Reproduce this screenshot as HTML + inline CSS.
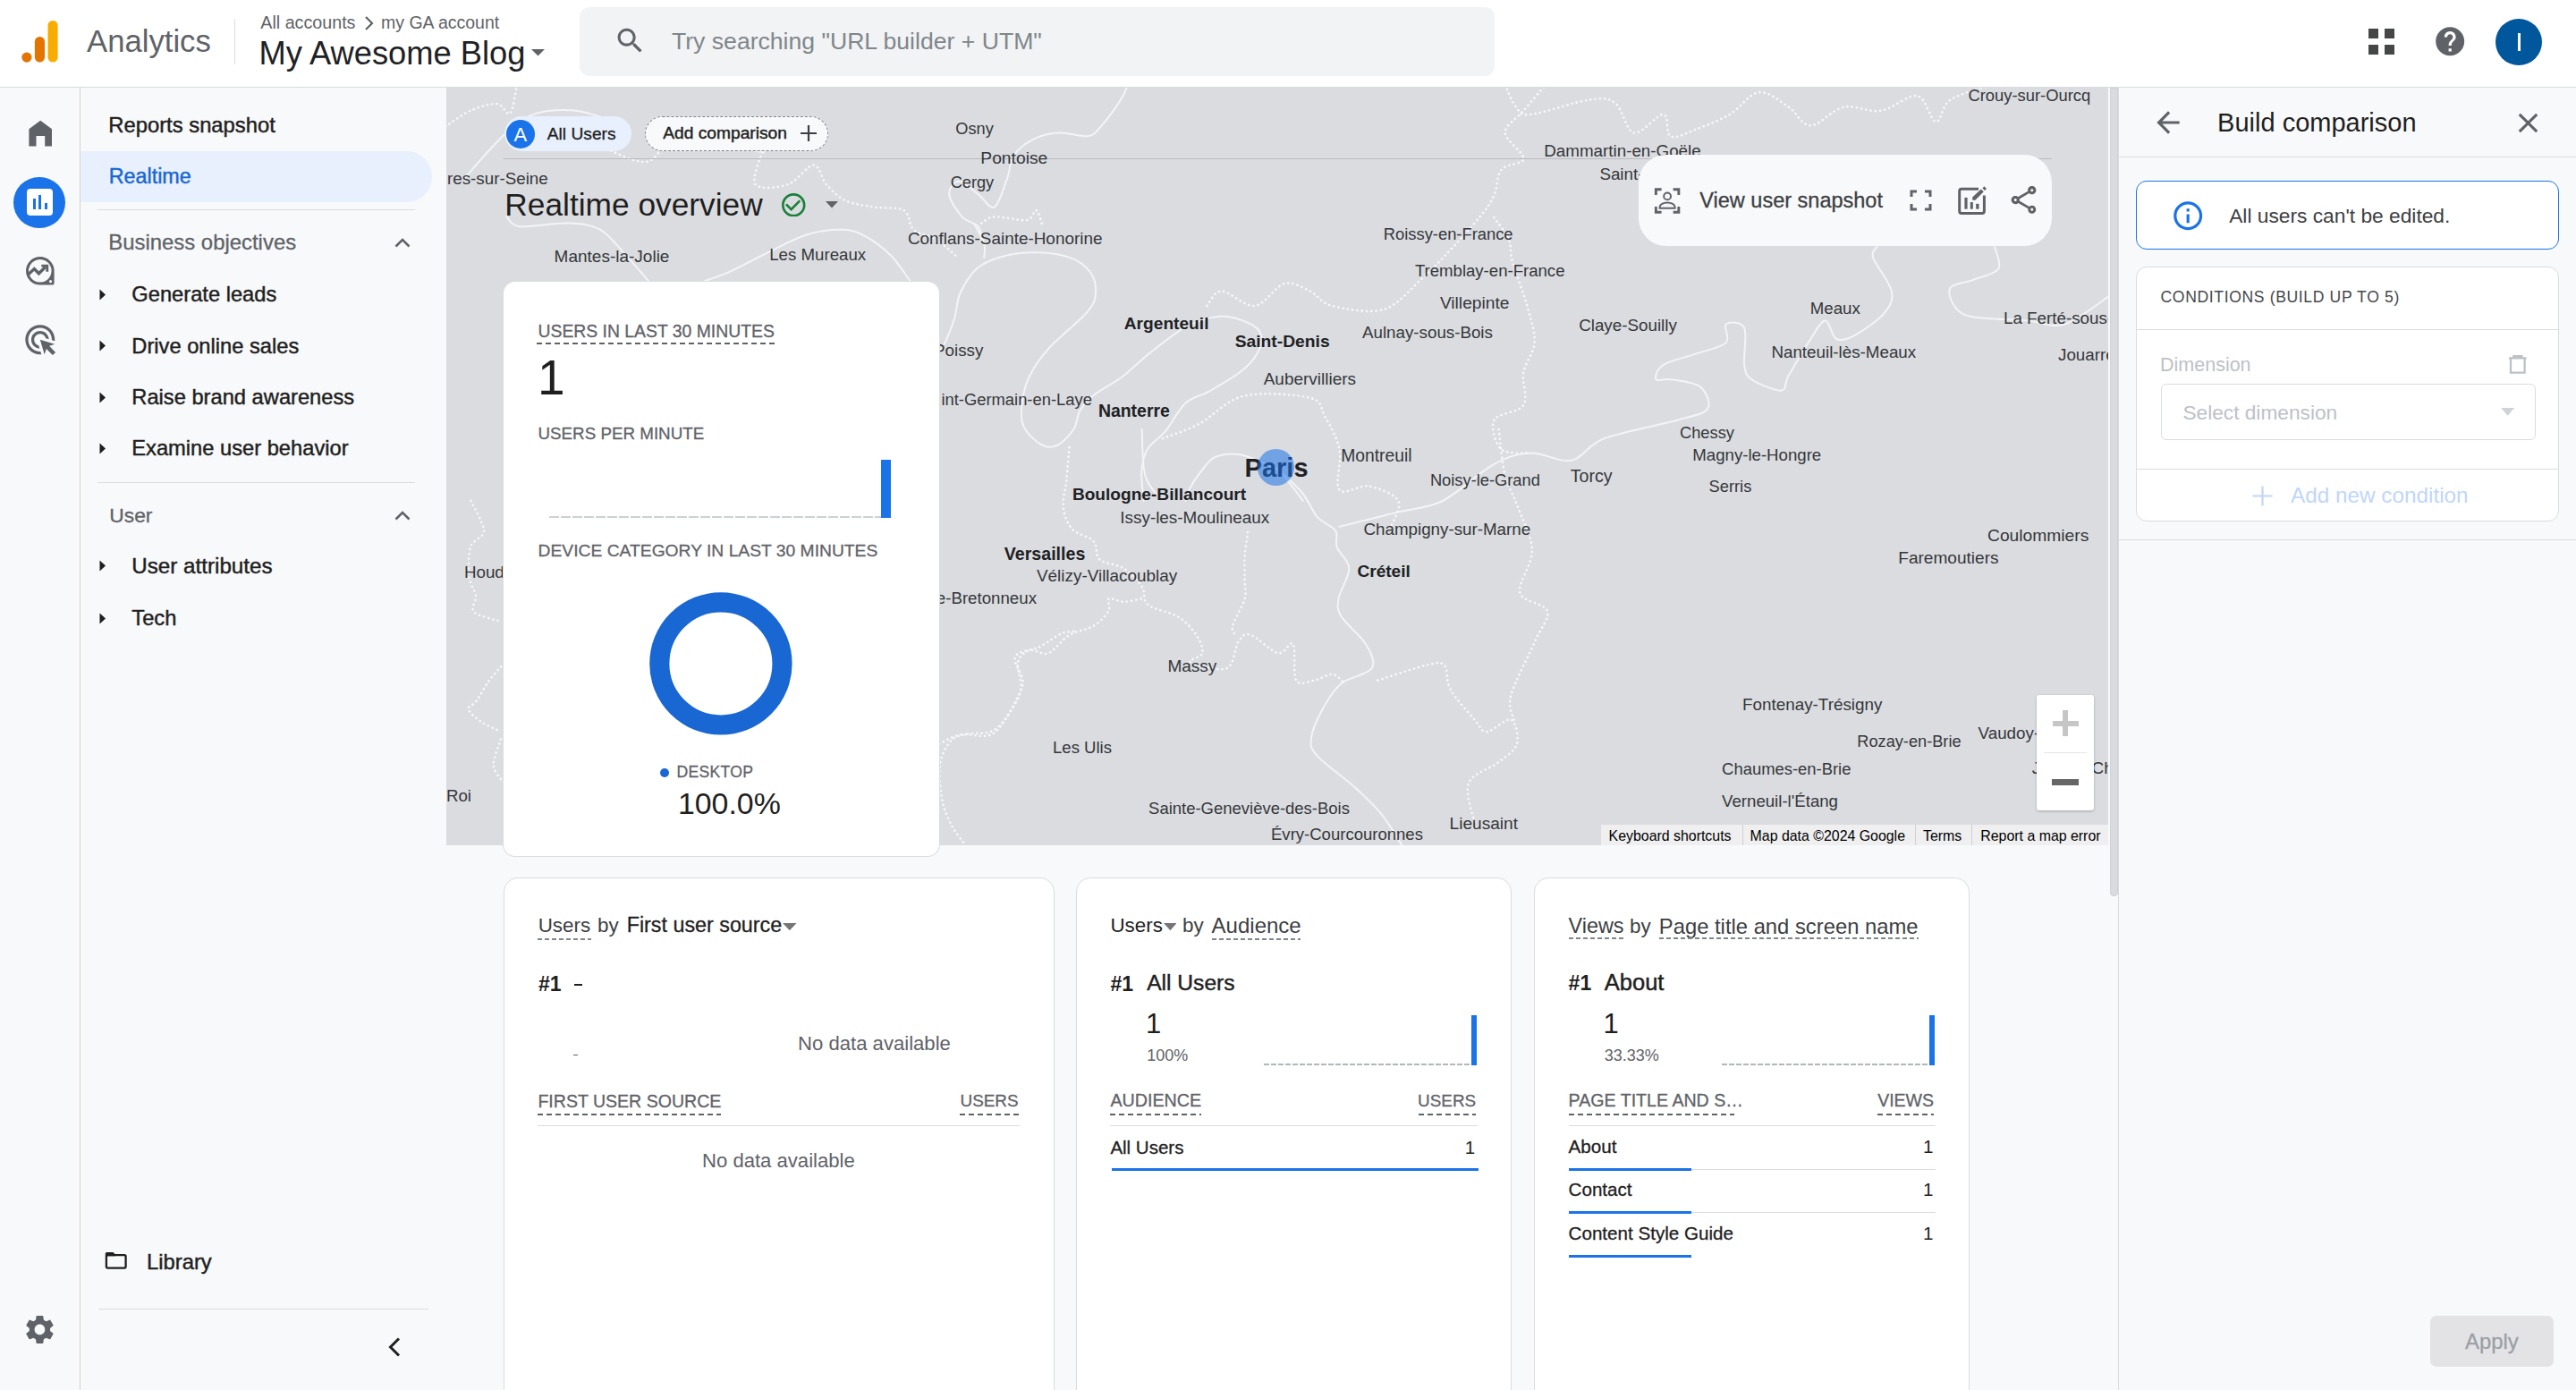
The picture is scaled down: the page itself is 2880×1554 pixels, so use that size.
<!DOCTYPE html>
<html><head><meta charset="utf-8"><title>Realtime overview</title>
<style>
html,body{margin:0;padding:0}
body{width:2880px;height:1554px;overflow:hidden;position:relative;background:#f8f9fa;font-family:"Liberation Sans",sans-serif;color:#202124}
@media (max-width:1600px){html{zoom:0.5}}
svg{display:block}
</style></head><body>
<div style="position:absolute;left:0.0px;top:0.0px;width:2880.0px;height:97.0px;background:#fff;"></div>
<div style="position:absolute;left:0.0px;top:97.0px;width:2880.0px;height:1.0px;background:#dadce0;"></div>
<svg style="position:absolute;left:20.0px;top:20.0px;" width="50.0" height="54.0" viewBox="20 20 50 54"><rect x="53.5" y="23" width="11.1" height="46.6" rx="5.5" fill="#f9ab00"/><rect x="38.9" y="40.9" width="11.1" height="28.7" rx="5.5" fill="#e37400"/><circle cx="29.9" cy="64.1" r="5.6" fill="#e37400"/></svg>
<div style="position:absolute;left:97.0px;top:29.2px;font-size:34.7px;line-height:1;white-space:nowrap;color:#5f6368;">Analytics</div>
<div style="position:absolute;left:262.0px;top:21.0px;width:1.0px;height:51.0px;background:#dadce0;"></div>
<div style="position:absolute;left:291.3px;top:15.5px;font-size:19.7px;line-height:1;white-space:nowrap;color:#5f6368;">All accounts</div>
<svg style="position:absolute;left:404.0px;top:16.0px;" width="18.0" height="20.0" viewBox="0 0 18 20"><polyline points="5,3 12,10 5,17" fill="none" stroke="#5f6368" stroke-width="2.2"/></svg>
<div style="position:absolute;left:426.0px;top:15.6px;font-size:19.5px;line-height:1;white-space:nowrap;color:#5f6368;">my GA account</div>
<div style="position:absolute;left:289.5px;top:41.9px;font-size:36.3px;line-height:1;white-space:nowrap;color:#202124;">My Awesome Blog</div>
<svg style="position:absolute;left:594.0px;top:55.0px;" width="15.0" height="8.0" viewBox="0 0 15 8"><path d="M0 0h15L7.5 7.5z" fill="#5f6368"/></svg>
<div style="position:absolute;left:648.0px;top:8.0px;width:1023.0px;height:77.0px;background:#f1f3f4;border-radius:11px"></div>
<svg style="position:absolute;left:686.4px;top:26.9px;" width="37.0" height="37.0" viewBox="0 0 24 24"><path fill="#5f6368" d="M15.5 14h-.79l-.28-.27C15.41 12.59 16 11.11 16 9.5 16 5.91 13.09 3 9.5 3S3 5.91 3 9.5 5.91 16 9.5 16c1.61 0 3.09-.59 4.23-1.57l.27.28v.79l5 4.99L20.49 19l-4.99-5zm-6 0C7.01 14 5 11.99 5 9.5S7.01 5 9.5 5 14 7.01 14 9.5 11.99 14 9.5 14z"/></svg>
<div style="position:absolute;left:751.0px;top:32.7px;font-size:26.6px;line-height:1;white-space:nowrap;color:#80868b;">Try searching "URL builder + UTM"</div>
<div style="position:absolute;left:2648.0px;top:32.0px;width:11.0px;height:11.0px;background:#444746;"></div>
<div style="position:absolute;left:2648.0px;top:50.0px;width:11.0px;height:11.0px;background:#444746;"></div>
<div style="position:absolute;left:2666.0px;top:32.0px;width:11.0px;height:11.0px;background:#444746;"></div>
<div style="position:absolute;left:2666.0px;top:50.0px;width:11.0px;height:11.0px;background:#444746;"></div>
<svg style="position:absolute;left:2719.8px;top:26.5px;" width="38.4" height="38.4" viewBox="0 0 24 24"><path fill="#5f6368" d="M12 2C6.48 2 2 6.48 2 12s4.48 10 10 10 10-4.48 10-10S17.52 2 12 2zm1 17h-2v-2h2v2zm2.07-7.75l-.9.92C13.45 12.9 13 13.5 13 15h-2v-.5c0-1.1.45-2.1 1.17-2.83l1.24-1.26c.37-.36.59-.86.59-1.41 0-1.1-.9-2-2-2s-2 .9-2 2H8c0-2.21 1.79-4 4-4s4 1.79 4 4c0 .88-.36 1.68-.93 2.25z"/></svg>
<div style="position:absolute;left:2790px;top:20.5px;width:52px;height:52px;border-radius:50%;background:#01579b"></div>
<div style="position:absolute;left:2814.5px;top:37.0px;width:3.0px;height:19.5px;background:#fff;"></div>
<div style="position:absolute;left:89.0px;top:98.0px;width:1.0px;height:1456.0px;background:#d3d3d3;"></div>
<svg style="position:absolute;left:28.0px;top:130.0px;" width="34.0" height="36.0" viewBox="28 130 34 36"><path fill="#5f6368" d="M45.2 134.8L58 144.3V163.4H50.2V152.1H40.5V163.4H32.4V144.3Z"/></svg>
<div style="position:absolute;left:15.2px;top:197.9px;width:57.4px;height:57px;border-radius:50%;background:#1a73e8"></div>
<div style="position:absolute;left:30.2px;top:211.0px;width:29.0px;height:29.5px;background:#fff;border-radius:4px"></div>
<div style="position:absolute;left:36.7px;top:222.3px;width:3.3px;height:11.9px;background:#1a73e8;"></div>
<div style="position:absolute;left:43.2px;top:217.6px;width:3.2px;height:16.6px;background:#1a73e8;"></div>
<div style="position:absolute;left:49.7px;top:226.6px;width:3.3px;height:7.6px;background:#1a73e8;"></div>
<svg style="position:absolute;left:25.0px;top:283.0px;" width="40.0" height="40.0" viewBox="25 283 40 40"><path fill-rule="evenodd" fill="#5f6368" d="M44.8 287A15.8 15.8 0 0 1 60.6 302.8V316.4Q60.6 318.6 58.4 318.6H44.8A15.8 15.8 0 0 1 44.8 287ZM44.8 290A12.8 12.8 0 1 0 44.81 290Z"/><circle cx="56.5" cy="314.7" r="1.6" fill="#f8f9fa"/><polyline points="31.4,307 38.3,300.6 43.4,305.8 51,298.3" fill="none" stroke="#5f6368" stroke-width="3.4"/><polyline points="46.3,297.2 52.8,297.2 52.8,303.8" fill="none" stroke="#5f6368" stroke-width="2.8"/></svg>
<svg style="position:absolute;left:25.4px;top:359.5px;" width="39.6" height="39.6" viewBox="0 0 24 24"><path fill="#5f6368" d="M11.71,17.99C8.53,17.84,6,15.22,6,12c0-3.31,2.69-6,6-6c3.22,0,5.84,2.53,5.99,5.71l-2.1-0.63C15.48,9.31,13.89,8,12,8 c-2.21,0-4,1.79-4,4c0,1.89,1.31,3.48,3.08,3.89L11.71,17.99z M22,12c0,0.3-0.01,0.6-0.04,0.9l-1.97-0.59C20,12.21,20,12.1,20,12 c0-4.42-3.58-8-8-8s-8,3.58-8,8s3.58,8,8,8c0.1,0,0.21,0,0.31-0.01l0.59,1.97C12.6,21.99,12.3,22,12,22C6.48,22,2,17.52,2,12 C2,6.48,6.48,2,12,2S22,6.48,22,12z M18.23,16.26L22,15l-10-3l3,10l1.26-3.77l4.27,4.27l1.96-1.96L18.23,16.26z"/></svg>
<svg style="position:absolute;left:25.2px;top:1467.2px;" width="38.9" height="38.9" viewBox="0 0 24 24"><path fill="#5f6368" d="M19.14 12.94c.04-.3.06-.61.06-.94 0-.32-.02-.64-.07-.94l2.03-1.58c.18-.14.23-.41.12-.61l-1.92-3.32c-.12-.22-.37-.29-.59-.22l-2.39.96c-.5-.38-1.03-.7-1.62-.94l-.36-2.54c-.04-.24-.24-.41-.48-.41h-3.84c-.24 0-.43.17-.47.41l-.36 2.54c-.59.24-1.13.57-1.62.94l-2.39-.96c-.22-.08-.47 0-.59.22L2.74 8.87c-.12.21-.08.47.12.61l2.03 1.58c-.05.3-.09.63-.09.94s.02.64.07.94l-2.03 1.58c-.18.14-.23.41-.12.61l1.92 3.32c.12.22.37.29.59.22l2.39-.96c.5.38 1.03.7 1.62.94l.36 2.54c.05.24.24.41.48.41h3.84c.24 0 .44-.17.47-.41l.36-2.54c.59-.24 1.13-.56 1.62-.94l2.39.96c.22.08.47 0 .59-.22l1.92-3.32c.12-.22.07-.47-.12-.61l-2.01-1.58zM12 15.6c-1.98 0-3.6-1.62-3.6-3.6s1.62-3.6 3.6-3.6 3.6 1.62 3.6 3.6-1.62 3.6-3.6 3.6z"/></svg>
<div style="position:absolute;left:121.3px;top:127.6px;font-size:23.8px;line-height:1;white-space:nowrap;color:#1f1f1f;-webkit-text-stroke:0.45px currentColor;">Reports snapshot</div>
<div style="position:absolute;left:90.0px;top:169.2px;width:392.8px;height:56.5px;background:#e8f0fe;border-radius:0 28px 28px 0"></div>
<div style="position:absolute;left:121.8px;top:186.2px;font-size:23.3px;line-height:1;white-space:nowrap;color:#1967d2;-webkit-text-stroke:0.45px currentColor;">Realtime</div>
<div style="position:absolute;left:109.0px;top:234.0px;width:355.0px;height:1.0px;background:#dadce0;"></div>
<div style="position:absolute;left:121.3px;top:259.2px;font-size:23.9px;line-height:1;white-space:nowrap;color:#5f6368;-webkit-text-stroke:0.3px currentColor;">Business objectives</div>
<svg style="position:absolute;left:441.0px;top:265.0px;" width="18.0" height="12.0" viewBox="0 0 18 12"><polyline points="1.5,10.5 9,3 16.5,10.5" fill="none" stroke="#5f6368" stroke-width="2.6"/></svg>
<svg style="position:absolute;left:111.0px;top:322.8px;" width="8.0" height="13.0" viewBox="0 0 8 13"><path d="M0.5 0.5L7 6.5L0.5 12.5z" fill="#1f1f1f"/></svg>
<div style="position:absolute;left:147.3px;top:318.2px;font-size:23.7px;line-height:1;white-space:nowrap;color:#1f1f1f;-webkit-text-stroke:0.45px currentColor;">Generate leads</div>
<svg style="position:absolute;left:111.0px;top:380.2px;" width="8.0" height="13.0" viewBox="0 0 8 13"><path d="M0.5 0.5L7 6.5L0.5 12.5z" fill="#1f1f1f"/></svg>
<div style="position:absolute;left:147.3px;top:375.6px;font-size:23.7px;line-height:1;white-space:nowrap;color:#1f1f1f;-webkit-text-stroke:0.45px currentColor;">Drive online sales</div>
<svg style="position:absolute;left:111.0px;top:437.6px;" width="8.0" height="13.0" viewBox="0 0 8 13"><path d="M0.5 0.5L7 6.5L0.5 12.5z" fill="#1f1f1f"/></svg>
<div style="position:absolute;left:147.3px;top:433.0px;font-size:23.7px;line-height:1;white-space:nowrap;color:#1f1f1f;-webkit-text-stroke:0.45px currentColor;">Raise brand awareness</div>
<svg style="position:absolute;left:111.0px;top:495.0px;" width="8.0" height="13.0" viewBox="0 0 8 13"><path d="M0.5 0.5L7 6.5L0.5 12.5z" fill="#1f1f1f"/></svg>
<div style="position:absolute;left:147.3px;top:490.4px;font-size:23.7px;line-height:1;white-space:nowrap;color:#1f1f1f;-webkit-text-stroke:0.45px currentColor;">Examine user behavior</div>
<div style="position:absolute;left:109.0px;top:539.0px;width:355.0px;height:1.0px;background:#dadce0;"></div>
<div style="position:absolute;left:122.3px;top:564.6px;font-size:22.8px;line-height:1;white-space:nowrap;color:#5f6368;-webkit-text-stroke:0.3px currentColor;">User</div>
<svg style="position:absolute;left:441.0px;top:570.0px;" width="18.0" height="12.0" viewBox="0 0 18 12"><polyline points="1.5,10.5 9,3 16.5,10.5" fill="none" stroke="#5f6368" stroke-width="2.6"/></svg>
<svg style="position:absolute;left:111.0px;top:626.4px;" width="8.0" height="13.0" viewBox="0 0 8 13"><path d="M0.5 0.5L7 6.5L0.5 12.5z" fill="#1f1f1f"/></svg>
<div style="position:absolute;left:147.3px;top:621.3px;font-size:24.2px;line-height:1;white-space:nowrap;color:#1f1f1f;-webkit-text-stroke:0.45px currentColor;">User attributes</div>
<svg style="position:absolute;left:111.0px;top:684.7px;" width="8.0" height="13.0" viewBox="0 0 8 13"><path d="M0.5 0.5L7 6.5L0.5 12.5z" fill="#1f1f1f"/></svg>
<div style="position:absolute;left:147.3px;top:680.1px;font-size:23.7px;line-height:1;white-space:nowrap;color:#1f1f1f;-webkit-text-stroke:0.45px currentColor;">Tech</div>
<svg style="position:absolute;left:114.0px;top:1396.0px;" width="32.0" height="26.0" viewBox="114 1396 32 26"><rect x="118.9" y="1403.1" width="21.7" height="14.6" rx="1.6" fill="none" stroke="#1f1f1f" stroke-width="2.3"/><path d="M117.8 1401.5Q117.8 1400 119.3 1400H126.5L129 1402.5V1404.2H117.8Z" fill="#1f1f1f"/></svg>
<div style="position:absolute;left:164.0px;top:1399.3px;font-size:23.8px;line-height:1;white-space:nowrap;color:#1f1f1f;-webkit-text-stroke:0.45px currentColor;">Library</div>
<div style="position:absolute;left:110.0px;top:1463.0px;width:368.8px;height:1.0px;background:#dadce0;"></div>
<svg style="position:absolute;left:432.0px;top:1494.0px;" width="18.0" height="24.0" viewBox="0 0 18 24"><polyline points="14,2.5 4.5,12 14,21.5" fill="none" stroke="#1f1f1f" stroke-width="3"/></svg>
<div style="position:absolute;left:499px;top:98px;width:1858px;height:847px;background:#dbdce0;overflow:hidden">
<div style="position:absolute;left:-499px;top:-98px;width:2880px;height:1554px">
<svg style="position:absolute;left:0;top:0" width="2880" height="1000" viewBox="0 0 2880 1000"><g fill="none" stroke="#f3f4f6" stroke-width="2" stroke-linecap="round" stroke-linejoin="round"><path d="M1278.6 559.9 C1278.2 554.3 1275.6 536.1 1276.3 526.5 C1277.1 516.8 1278.6 509.4 1283.0 502.0 C1287.5 494.5 1296.0 490.4 1303.1 481.9 C1310.2 473.3 1317.2 458.1 1325.4 450.7 C1333.6 443.2 1341.7 443.2 1352.2 437.3 C1362.6 431.3 1378.9 422.1 1387.8 415.0 C1396.7 407.9 1401.9 401.6 1405.7 394.9 C1409.4 388.2 1411.6 380.4 1410.1 374.9 C1408.6 369.3 1404.5 365.0 1396.7 361.5 C1388.9 358.0 1375.2 352.9 1363.3 353.7 C1351.4 354.4 1338.4 359.1 1325.4 365.9 C1312.4 372.8 1297.2 385.6 1285.3 394.9 C1273.4 404.2 1264.5 413.9 1254.0 421.7 C1243.6 429.5 1230.6 435.4 1222.8 441.8 C1215.0 448.1 1210.9 453.3 1207.2 459.6 C1203.5 465.9 1204.6 473.3 1200.5 479.7 C1196.4 486.0 1188.6 494.5 1182.7 497.5 C1176.8 500.5 1171.2 500.8 1164.9 497.5 C1158.5 494.1 1148.5 485.2 1144.8 477.4 C1141.1 469.6 1141.4 460.3 1142.6 450.7 C1143.7 441.0 1146.3 429.9 1151.5 419.5 C1156.7 409.0 1163.0 400.1 1173.8 388.2 C1184.6 376.3 1207.6 358.5 1216.1 348.1 C1224.7 337.7 1224.7 333.2 1225.1 325.8 C1225.4 318.4 1223.2 309.8 1218.4 303.5 C1213.5 297.2 1205.7 291.4 1196.1 287.9 C1186.4 284.4 1172.3 282.7 1160.4 282.3 C1148.5 282.0 1135.9 282.9 1124.7 285.7 C1113.6 288.5 1102.1 292.0 1093.5 299.1 C1085.0 306.1 1077.9 318.4 1073.4 328.0 C1069.0 337.7 1070.1 347.0 1066.8 357.0 C1063.4 367.1 1057.8 381.9 1053.4 388.2 C1048.9 394.6 1042.2 393.8 1040.0 394.9"/><path d="M1100.2 287.9 C1100.2 285.3 1102.1 278.6 1100.2 272.3 C1098.3 266.0 1090.9 253.7 1089.1 250.0"/><path d="M1456.9 559.9 C1454.3 556.6 1446.5 545.8 1441.3 539.9 C1436.1 533.9 1434.6 529.5 1425.7 524.2 C1416.8 519.0 1399.0 510.9 1387.8 508.6 C1376.7 506.4 1366.3 507.9 1358.8 510.9 C1351.4 513.8 1348.1 520.5 1343.2 526.5 C1338.4 532.4 1332.8 541.0 1329.9 546.5 C1326.9 552.1 1326.1 557.7 1325.4 559.9"/><path d="M1097.3 267.7 C1096.7 265.3 1097.3 257.4 1093.7 253.2 C1090.1 249.0 1081.0 248.4 1075.6 242.4 C1070.2 236.4 1061.8 223.8 1061.2 217.1 C1060.6 210.5 1066.6 202.7 1072.0 202.7 C1077.4 202.7 1087.0 212.3 1093.7 217.1 C1100.3 221.9 1106.3 234.6 1111.7 231.6 C1117.1 228.6 1122.5 208.7 1126.2 199.1 C1129.8 189.5 1128.6 181.0 1133.4 173.8 C1138.2 166.6 1146.6 160.0 1155.0 155.8 C1163.5 151.5 1173.7 149.1 1183.9 148.5 C1194.1 147.9 1208.6 153.4 1216.4 152.2 C1224.2 150.9 1224.8 147.9 1230.9 141.3 C1236.9 134.7 1247.7 119.7 1252.5 112.4 C1257.3 105.2 1258.5 100.4 1259.7 98.0"/><path d="M1017.9 314.6 C1014.2 309.8 1004.6 294.1 996.2 285.7 C987.8 277.3 976.3 268.9 967.3 264.1 C958.3 259.3 952.9 257.1 942.0 256.8 C931.2 256.5 916.2 258.0 902.3 262.3 C888.5 266.5 873.5 275.2 859.0 282.1 C844.6 289.0 827.7 298.4 815.7 303.8 C803.7 309.2 791.6 312.8 786.8 314.6"/><path d="M725.4 314.6 C721.2 309.8 709.2 295.4 700.2 285.7 C691.1 276.1 682.1 262.9 671.3 256.8 C660.5 250.8 650.2 250.2 635.2 249.6 C620.1 249.0 592.5 254.4 581.0 253.2 C569.6 252.0 569.0 244.2 566.6 242.4"/><path d="M519.7 199.1 C523.9 194.3 536.5 179.2 544.9 170.2 C553.4 161.2 561.2 152.2 570.2 144.9 C579.2 137.7 587.7 130.5 599.1 126.9 C610.5 123.3 626.8 122.7 638.8 123.3 C650.8 123.9 665.9 129.3 671.3 130.5"/><path d="M1426.5 522.3 C1431.4 527.1 1448.2 541.7 1455.9 551.0 C1463.6 560.3 1466.6 571.0 1472.8 578.1 C1479.0 585.1 1489.4 587.6 1493.1 593.3 C1496.7 598.9 1492.2 604.8 1494.8 611.9 C1497.3 618.9 1508.0 626.0 1508.3 635.5 C1508.6 645.1 1497.9 660.3 1496.5 669.3 C1495.1 678.4 1494.8 681.2 1499.8 689.6 C1504.9 698.1 1521.3 710.5 1526.9 720.1 C1532.5 729.6 1538.2 739.8 1533.7 747.1 C1529.2 754.4 1508.9 756.7 1499.8 764.0 C1490.8 771.3 1485.2 780.9 1479.6 791.1 C1473.9 801.2 1467.2 815.9 1466.0 824.9 C1464.9 833.9 1464.9 836.2 1472.8 845.2 C1480.7 854.2 1501.5 868.3 1513.4 879.0 C1525.2 889.7 1534.8 898.4 1543.8 909.4 C1552.8 920.4 1563.5 939.0 1567.5 944.9"/><path d="M1276.7 480.0 C1277.2 488.5 1276.7 517.8 1280.1 530.7 C1283.4 543.7 1294.2 553.3 1297.0 557.8"/><path d="M1497.5 588.8 C1508.5 586.1 1544.2 577.2 1563.4 572.4 C1582.6 567.6 1594.9 568.9 1612.8 560.0 C1630.6 551.1 1653.9 527.8 1670.4 518.9 C1686.8 510.0 1697.1 507.2 1711.5 506.5 C1725.9 505.8 1743.1 517.5 1756.8 514.8 C1770.5 512.0 1773.9 497.6 1793.8 490.1 C1813.7 482.5 1856.9 475.0 1876.1 469.5 C1895.3 464.0 1904.9 463.3 1909.1 457.1 C1913.2 451.0 1907.7 437.9 1900.8 432.4 C1894.0 427.0 1876.1 425.6 1867.9 424.2 C1859.7 422.8 1852.8 427.0 1851.4 424.2 C1850.1 421.5 1852.1 412.6 1859.7 407.8 C1867.2 403.0 1885.0 399.5 1896.7 395.4 C1908.4 391.3 1924.1 388.6 1929.6 383.1 C1935.1 377.6 1926.2 365.2 1929.6 362.5 C1933.1 359.7 1946.8 359.1 1950.2 366.6 C1953.6 374.1 1948.8 398.2 1950.2 407.8 C1951.6 417.4 1951.6 419.4 1958.4 424.2 C1965.3 429.0 1984.5 437.2 1991.4 436.6 C1998.2 435.9 1994.1 429.7 1999.6 420.1 C2005.1 410.5 2017.4 389.2 2024.3 379.0 C2031.1 368.7 2035.9 358.4 2040.7 358.4 C2045.5 358.4 2047.6 376.2 2053.1 379.0 C2058.6 381.7 2064.7 379.6 2073.7 374.8 C2082.6 370.0 2099.7 358.4 2106.6 350.1 C2113.4 341.9 2116.9 335.7 2114.8 325.5 C2112.8 315.2 2097.0 296.6 2094.2 288.4 C2091.5 280.2 2097.7 278.1 2098.4 276.1"/><path d="M2230.0 276.1 C2230.7 280.2 2238.3 294.6 2234.2 300.8 C2230.0 306.9 2214.3 309.7 2205.3 313.1 C2196.4 316.5 2184.1 316.5 2180.7 321.3 C2177.2 326.1 2180.7 336.4 2184.8 341.9 C2188.9 347.4 2191.6 351.5 2205.3 354.3 C2219.1 357.0 2249.9 357.0 2267.1 358.4 C2284.2 359.7 2292.7 367.3 2308.2 362.5 C2323.7 357.7 2351.4 335.1 2360.1 329.6"/></g><g fill="none" stroke="#f6f7f9" stroke-width="2.7" stroke-dasharray="0.1 5.2" stroke-linecap="round"><path d="M526.5 560.0 C528.3 563.7 535.3 576.4 537.7 582.4 C540.0 588.5 542.4 591.8 540.5 596.5 C538.6 601.1 529.3 603.5 526.5 610.5 C523.7 617.5 523.7 631.5 523.7 638.5 C523.7 645.6 525.1 647.9 526.5 652.6 C527.9 657.2 531.6 661.4 532.1 666.6 C532.5 671.7 526.5 679.2 529.3 683.4 C532.1 687.6 543.8 690.0 548.9 691.8 C554.0 693.7 558.3 694.2 560.1 694.6"/><path d="M560.1 745.1 C557.8 747.9 550.8 755.4 546.1 762.0 C541.4 768.5 535.8 779.3 532.1 784.4 C528.3 789.5 522.7 789.1 523.7 792.8 C524.6 796.6 531.6 802.6 537.7 806.8 C543.8 811.1 556.4 816.2 560.1 818.1"/><path d="M560.1 826.5 C558.7 831.2 551.7 847.1 551.7 854.5 C551.7 862.0 558.7 868.6 560.1 871.4"/><path d="M1200.0 705.9 C1197.6 706.3 1191.8 705.9 1185.7 708.7 C1179.5 711.5 1171.6 718.5 1163.2 722.7 C1154.8 726.9 1138.4 727.4 1135.2 733.9 C1131.9 740.5 1143.6 753.5 1143.6 762.0 C1143.6 770.4 1138.4 777.4 1135.2 784.4 C1131.9 791.4 1128.6 798.4 1123.9 804.0 C1119.3 809.6 1114.6 815.3 1107.1 818.1 C1099.6 820.9 1086.5 819.0 1079.1 820.9 C1071.6 822.7 1066.9 823.7 1062.2 829.3 C1057.6 834.9 1052.4 843.3 1051.0 854.5 C1049.6 865.8 1051.5 884.9 1053.8 896.6 C1056.2 908.3 1060.8 916.7 1065.0 924.7 C1069.2 932.6 1076.7 941.0 1079.1 944.3"/><path d="M1349.4 341.9 C1352.1 339.2 1356.9 325.5 1365.8 325.5 C1374.8 325.5 1391.2 343.3 1402.9 341.9 C1414.5 340.5 1425.5 320.0 1435.8 317.2 C1446.1 314.5 1455.7 321.3 1464.6 325.5 C1473.5 329.6 1475.6 338.5 1489.3 341.9 C1503.0 345.3 1530.5 350.8 1546.9 346.0 C1563.4 341.2 1576.4 323.4 1588.1 313.1 C1599.7 302.8 1605.9 296.0 1616.9 284.3 C1627.8 272.6 1645.0 254.1 1653.9 243.1 C1662.8 232.2 1666.3 227.4 1670.4 218.5 C1674.5 209.5 1673.1 196.5 1678.6 189.7 C1684.1 182.8 1702.6 184.2 1703.3 177.3 C1704.0 170.4 1682.7 157.4 1682.7 148.5 C1682.7 139.6 1695.7 132.7 1703.3 123.8 C1710.8 114.9 1723.9 99.8 1728.0 95.0"/><path d="M1670.4 243.1 C1673.1 247.3 1683.4 259.6 1686.8 267.8 C1690.3 276.1 1687.5 280.2 1690.9 292.5 C1694.4 304.9 1703.3 326.8 1707.4 341.9 C1711.5 357.0 1716.3 370.7 1715.6 383.1 C1715.0 395.4 1705.3 404.3 1703.3 416.0 C1701.2 427.6 1708.8 444.1 1703.3 453.0 C1697.8 461.9 1674.5 461.3 1670.4 469.5 C1666.3 477.7 1671.7 496.2 1678.6 502.4 C1685.5 508.6 1706.0 505.8 1711.5 506.5"/><path d="M1300.0 490.1 C1306.9 487.3 1326.1 481.5 1341.2 473.6 C1356.2 465.7 1370.0 447.5 1390.5 442.7 C1411.1 437.9 1449.5 441.0 1464.6 444.8 C1479.7 448.6 1475.6 455.8 1481.1 465.4 C1486.6 475.0 1494.8 488.7 1497.5 502.4 C1500.3 516.1 1492.0 540.8 1497.5 547.7 C1503.0 554.5 1519.5 541.5 1530.5 543.6 C1541.4 545.6 1559.3 552.5 1563.4 560.0 C1567.5 567.6 1556.5 584.0 1555.1 588.8"/><path d="M1682.7 95.0 C1684.8 99.1 1690.3 114.2 1695.1 119.7 C1699.9 125.2 1697.8 129.3 1711.5 127.9 C1725.2 126.6 1761.6 113.5 1777.4 111.5 C1793.1 109.4 1797.9 109.4 1806.2 115.6 C1814.4 121.7 1817.8 146.4 1826.7 148.5 C1835.7 150.6 1852.8 127.2 1859.7 127.9 C1866.5 128.6 1861.7 149.9 1867.9 152.6 C1874.1 155.4 1885.7 148.5 1896.7 144.4 C1907.7 140.3 1922.1 134.8 1933.7 127.9 C1945.4 121.1 1955.7 104.6 1966.7 103.2 C1977.6 101.9 1990.0 113.5 1999.6 119.7 C2009.2 125.9 2014.0 140.3 2024.3 140.3 C2034.6 140.3 2048.3 122.4 2061.3 119.7 C2074.3 116.9 2088.8 125.9 2102.5 123.8 C2116.2 121.7 2133.3 105.3 2143.6 107.3 C2153.9 109.4 2158.0 135.5 2164.2 136.2 C2170.4 136.8 2170.4 118.3 2180.7 111.5 C2190.9 104.6 2218.4 97.7 2225.9 95.0"/><path d="M851.8 170.2 C850.6 176.2 839.8 200.3 844.6 206.3 C849.4 212.3 869.8 209.9 880.7 206.3 C891.5 202.7 902.3 184.6 909.6 184.6 C916.8 184.6 918.0 199.7 924.0 206.3 C930.0 212.9 936.6 220.1 945.7 224.4 C954.7 228.6 967.3 229.8 978.1 231.6 C989.0 233.4 1003.4 231.0 1010.6 235.2 C1017.9 239.4 1015.4 251.4 1021.5 256.8 C1027.5 262.3 1038.9 262.9 1046.7 267.7 C1054.6 272.5 1064.8 282.7 1068.4 285.7"/><path d="M1097.3 249.6 C1099.7 248.4 1103.3 243.0 1111.7 242.4 C1120.1 241.8 1140.0 247.2 1147.8 246.0 C1155.6 244.8 1155.6 234.0 1158.6 235.2 C1161.7 236.4 1164.7 250.2 1165.9 253.2"/><path d="M498.0 141.3 C502.8 138.3 517.3 127.5 526.9 123.3 C536.5 119.1 548.5 115.4 555.8 116.1 C563.0 116.7 566.6 129.9 570.2 126.9 C573.8 123.9 576.2 102.8 577.4 98.0"/><path d="M678.5 166.6 C685.7 169.0 708.6 182.2 721.8 181.0 C735.1 179.8 735.7 161.2 757.9 159.4 C780.2 157.6 839.2 168.4 855.4 170.2"/><path d="M1195.5 500.3 C1195.0 506.5 1193.3 526.2 1192.2 537.5 C1191.0 548.8 1187.6 558.9 1188.8 567.9 C1189.9 576.9 1193.3 585.4 1198.9 591.6 C1204.6 597.8 1217.5 599.5 1222.6 605.1 C1227.7 610.7 1223.7 620.3 1229.3 625.4 C1235.0 630.5 1248.5 630.5 1256.4 635.5 C1264.3 640.6 1272.2 649.1 1276.7 655.8 C1281.2 662.6 1276.7 670.5 1283.4 676.1 C1290.2 681.7 1308.2 684.0 1317.3 689.6 C1326.3 695.3 1333.0 703.2 1337.5 709.9 C1342.1 716.7 1345.4 725.1 1344.3 730.2 C1343.2 735.3 1326.3 737.5 1330.8 740.4 C1335.3 743.2 1362.3 751.1 1371.4 747.1 C1380.4 743.2 1380.4 722.9 1384.9 716.7 C1389.4 710.5 1391.1 707.7 1398.4 709.9 C1405.7 712.2 1421.0 728.5 1428.8 730.2 C1436.7 731.9 1442.4 715.0 1445.7 720.1 C1449.1 725.1 1445.2 753.9 1449.1 760.6 C1453.1 767.4 1462.7 761.8 1469.4 760.6 C1476.2 759.5 1484.1 753.3 1489.7 753.9 C1495.3 754.4 1501.0 762.3 1503.2 764.0"/><path d="M1395.0 595.0 C1394.5 599.5 1392.2 613.0 1391.6 622.0 C1391.1 631.0 1391.6 641.2 1391.6 649.1 C1391.6 657.0 1393.9 660.9 1391.6 669.3 C1389.4 677.8 1379.8 693.0 1378.1 699.8 C1376.4 706.5 1380.9 708.2 1381.5 709.9"/><path d="M1050.1 831.6 C1054.1 830.0 1064.2 823.2 1073.8 821.5 C1083.4 819.8 1098.6 825.4 1107.6 821.5 C1116.6 817.6 1122.3 806.3 1127.9 797.8 C1133.5 789.4 1139.7 780.4 1141.4 770.8 C1143.1 761.2 1136.4 747.7 1138.1 740.4 C1139.7 733.0 1145.9 728.5 1151.6 726.8 C1157.2 725.1 1164.5 733.0 1171.9 730.2 C1179.2 727.4 1187.1 715.0 1195.5 709.9 C1204.0 704.9 1215.3 704.3 1222.6 699.8 C1229.9 695.3 1236.7 687.9 1239.5 682.9 C1242.3 677.8 1236.7 671.0 1239.5 669.3 C1242.3 667.7 1250.2 672.7 1256.4 672.7 C1262.6 672.7 1273.3 669.9 1276.7 669.3"/><path d="M1540.4 760.6 C1549.4 757.8 1582.1 746.6 1594.5 743.7 C1606.9 740.9 1610.3 739.2 1614.8 743.7 C1619.3 748.2 1615.9 760.6 1621.6 770.8 C1627.2 780.9 1641.9 796.7 1648.6 804.6 C1655.4 812.5 1655.4 818.1 1662.1 818.1 C1668.9 818.1 1683.6 802.3 1689.2 804.6 C1694.8 806.9 1698.2 823.8 1696.0 831.6 C1693.7 839.5 1684.7 844.6 1675.7 851.9 C1666.7 859.3 1646.4 864.3 1641.9 875.6 C1637.4 886.9 1647.5 912.2 1648.6 919.6"/><path d="M1675.7 480.0 C1676.8 488.5 1679.1 516.6 1682.4 530.7 C1685.8 544.8 1690.9 550.4 1696.0 564.5 C1701.0 578.6 1712.3 598.9 1712.9 615.2 C1713.4 631.6 1696.5 651.3 1699.3 662.6 C1702.2 673.9 1727.0 673.9 1729.8 682.9 C1732.6 691.9 1723.0 700.9 1716.2 716.7 C1709.5 732.5 1693.1 762.9 1689.2 777.5 C1685.3 792.2 1692.0 800.1 1692.6 804.6"/></g></svg>
<div style="position:absolute;left:563.0px;top:177.0px;width:1730.7px;height:1.0px;background:#b9bbbf;"></div>
<div style="position:absolute;left:2200.5px;top:97.7px;font-size:18.36px;line-height:1;white-space:nowrap;color:#34373a;">Crouy-sur-Ourcq</div>
<div style="position:absolute;left:1068.3px;top:134.8px;font-size:18.2px;line-height:1;white-space:nowrap;color:#34373a;">Osny</div>
<div style="position:absolute;left:1096.3px;top:167.1px;font-size:19.27px;line-height:1;white-space:nowrap;color:#34373a;">Pontoise</div>
<div style="position:absolute;left:1726.3px;top:160.4px;font-size:18.8px;line-height:1;white-space:nowrap;color:#34373a;">Dammartin-en-Goële</div>
<div style="position:absolute;left:1788.4px;top:186.1px;font-size:18.8px;line-height:1;white-space:nowrap;color:#34373a;">Saint-Mard</div>
<div style="position:absolute;left:500.0px;top:191.4px;font-size:18.8px;line-height:1;white-space:nowrap;color:#34373a;">res-sur-Seine</div>
<div style="position:absolute;left:1062.7px;top:195.3px;font-size:18.2px;line-height:1;white-space:nowrap;color:#34373a;">Cergy</div>
<div style="position:absolute;left:1014.9px;top:257.5px;font-size:18.91px;line-height:1;white-space:nowrap;color:#34373a;">Conflans-Sainte-Honorine</div>
<div style="position:absolute;left:1546.8px;top:252.7px;font-size:18.35px;line-height:1;white-space:nowrap;color:#34373a;">Roissy-en-France</div>
<div style="position:absolute;left:619.6px;top:277.0px;font-size:19.0px;line-height:1;white-space:nowrap;color:#34373a;">Mantes-la-Jolie</div>
<div style="position:absolute;left:860.2px;top:276.3px;font-size:18.68px;line-height:1;white-space:nowrap;color:#34373a;">Les Mureaux</div>
<div style="position:absolute;left:1581.9px;top:294.2px;font-size:18.59px;line-height:1;white-space:nowrap;color:#34373a;">Tremblay-en-France</div>
<div style="position:absolute;left:1609.9px;top:328.7px;font-size:19.21px;line-height:1;white-space:nowrap;color:#34373a;">Villepinte</div>
<div style="position:absolute;left:2023.8px;top:335.9px;font-size:18.66px;line-height:1;white-space:nowrap;color:#34373a;">Meaux</div>
<div style="position:absolute;left:2240.0px;top:346.5px;font-size:18.8px;line-height:1;white-space:nowrap;color:#34373a;">La Ferté-sous-Jouarre</div>
<div style="position:absolute;left:1256.8px;top:352.0px;font-size:19.15px;line-height:1;white-space:nowrap;color:#202124;font-weight:bold;">Argenteuil</div>
<div style="position:absolute;left:1765.2px;top:354.8px;font-size:18.8px;line-height:1;white-space:nowrap;color:#34373a;">Claye-Souilly</div>
<div style="position:absolute;left:1523.0px;top:363.3px;font-size:18.76px;line-height:1;white-space:nowrap;color:#34373a;">Aulnay-sous-Bois</div>
<div style="position:absolute;left:1380.7px;top:372.1px;font-size:19.27px;line-height:1;white-space:nowrap;color:#202124;font-weight:bold;">Saint-Denis</div>
<div style="position:absolute;left:1044.0px;top:383.3px;font-size:18.8px;line-height:1;white-space:nowrap;color:#34373a;">Poissy</div>
<div style="position:absolute;left:1980.4px;top:384.7px;font-size:18.8px;line-height:1;white-space:nowrap;color:#34373a;">Nanteuil-lès-Meaux</div>
<div style="position:absolute;left:2301.0px;top:387.8px;font-size:18.8px;line-height:1;white-space:nowrap;color:#34373a;">Jouarre</div>
<div style="position:absolute;left:1412.7px;top:414.3px;font-size:18.98px;line-height:1;white-space:nowrap;color:#34373a;">Aubervilliers</div>
<div style="position:absolute;left:1052.4px;top:438.1px;font-size:18.39px;line-height:1;white-space:nowrap;color:#34373a;">int-Germain-en-Laye</div>
<div style="position:absolute;left:1227.9px;top:449.5px;font-size:19.45px;line-height:1;white-space:nowrap;color:#202124;font-weight:bold;">Nanterre</div>
<div style="position:absolute;left:1878.0px;top:474.8px;font-size:18.29px;line-height:1;white-space:nowrap;color:#34373a;">Chessy</div>
<div style="position:absolute;left:1892.3px;top:499.6px;font-size:18.64px;line-height:1;white-space:nowrap;color:#34373a;">Magny-le-Hongre</div>
<div style="position:absolute;left:1499.2px;top:499.8px;font-size:19.31px;line-height:1;white-space:nowrap;color:#34373a;">Montreuil</div>
<div style="position:absolute;left:1598.9px;top:528.1px;font-size:18.29px;line-height:1;white-space:nowrap;color:#34373a;">Noisy-le-Grand</div>
<div style="position:absolute;left:1755.8px;top:523.2px;font-size:19.55px;line-height:1;white-space:nowrap;color:#34373a;">Torcy</div>
<div style="position:absolute;left:1910.6px;top:534.8px;font-size:18.27px;line-height:1;white-space:nowrap;color:#34373a;">Serris</div>
<div style="position:absolute;left:1198.9px;top:543.2px;font-size:19.12px;line-height:1;white-space:nowrap;color:#202124;font-weight:bold;">Boulogne-Billancourt</div>
<div style="position:absolute;left:1252.3px;top:570.4px;font-size:18.9px;line-height:1;white-space:nowrap;color:#34373a;">Issy-les-Moulineaux</div>
<div style="position:absolute;left:1524.5px;top:583.0px;font-size:18.77px;line-height:1;white-space:nowrap;color:#34373a;">Champigny-sur-Marne</div>
<div style="position:absolute;left:2222.0px;top:589.4px;font-size:19.24px;line-height:1;white-space:nowrap;color:#34373a;">Coulommiers</div>
<div style="position:absolute;left:1122.8px;top:610.4px;font-size:19.63px;line-height:1;white-space:nowrap;color:#202124;font-weight:bold;">Versailles</div>
<div style="position:absolute;left:2122.3px;top:614.3px;font-size:19.06px;line-height:1;white-space:nowrap;color:#34373a;">Faremoutiers</div>
<div style="position:absolute;left:1517.4px;top:629.4px;font-size:19.12px;line-height:1;white-space:nowrap;color:#202124;font-weight:bold;">Créteil</div>
<div style="position:absolute;left:518.9px;top:631.0px;font-size:18.8px;line-height:1;white-space:nowrap;color:#34373a;">Houdan</div>
<div style="position:absolute;left:1159.0px;top:634.7px;font-size:18.9px;line-height:1;white-space:nowrap;color:#34373a;">Vélizy-Villacoublay</div>
<div style="position:absolute;left:1305.4px;top:735.3px;font-size:19.04px;line-height:1;white-space:nowrap;color:#34373a;">Massy</div>
<div style="position:absolute;left:1948.1px;top:778.5px;font-size:18.83px;line-height:1;white-space:nowrap;color:#34373a;">Fontenay-Trésigny</div>
<div style="position:absolute;left:2211.6px;top:810.6px;font-size:18.8px;line-height:1;white-space:nowrap;color:#34373a;">Vaudoy-en-Brie</div>
<div style="position:absolute;left:2076.3px;top:819.6px;font-size:18.2px;line-height:1;white-space:nowrap;color:#34373a;">Rozay-en-Brie</div>
<div style="position:absolute;left:1177.0px;top:827.0px;font-size:18.56px;line-height:1;white-space:nowrap;color:#34373a;">Les Ulis</div>
<div style="position:absolute;left:1925.1px;top:850.5px;font-size:18.43px;line-height:1;white-space:nowrap;color:#34373a;">Chaumes-en-Brie</div>
<div style="position:absolute;left:2271.8px;top:850.2px;font-size:18.8px;line-height:1;white-space:nowrap;color:#34373a;">Jouy-le-Châtel</div>
<div style="position:absolute;left:1925.1px;top:886.9px;font-size:18.64px;line-height:1;white-space:nowrap;color:#34373a;">Verneuil-l'Étang</div>
<div style="position:absolute;left:1284.1px;top:894.7px;font-size:18.48px;line-height:1;white-space:nowrap;color:#34373a;">Sainte-Geneviève-des-Bois</div>
<div style="position:absolute;left:1620.6px;top:911.1px;font-size:19.09px;line-height:1;white-space:nowrap;color:#34373a;">Lieusaint</div>
<div style="position:absolute;left:1421.0px;top:924.1px;font-size:18.54px;line-height:1;white-space:nowrap;color:#34373a;">Évry-Courcouronnes</div>
<div style="position:absolute;right:1721.0px;top:659.5px;font-size:18.7px;line-height:1;white-space:nowrap;color:#34373a;">e-Bretonneux</div>
<div style="position:absolute;right:2353.0px;top:880.7px;font-size:18.7px;line-height:1;white-space:nowrap;color:#34373a;">Roi</div>
<div style="position:absolute;left:1391.6px;top:509.1px;font-size:29px;line-height:1;white-space:nowrap;color:#202124;font-weight:bold;">Paris</div>
<div style="position:absolute;left:1406.2px;top:502px;width:40.6px;height:40.6px;border-radius:50%;background:rgba(26,115,232,0.55)"></div>
<div style="position:absolute;left:563.7px;top:130.0px;width:142.8px;height:39.0px;background:#e8f0fe;border-radius:20px"></div>
<div style="position:absolute;left:566.1px;top:134.1px;width:31.8px;height:31.8px;border-radius:50%;background:#1a73e8"></div>
<div style="position:absolute;left:574.5px;top:139.8px;font-size:22px;line-height:1;white-space:nowrap;color:#fff;">A</div>
<div style="position:absolute;left:611.8px;top:140.2px;font-size:19.2px;line-height:1;white-space:nowrap;color:#1f1f1f;-webkit-text-stroke:0.3px currentColor;">All Users</div>
<div style="position:absolute;left:720.5px;top:130px;width:203.5px;height:37px;border:1px dashed #80868b;border-radius:20px;background:#f8f9fa"></div>
<div style="position:absolute;left:741.3px;top:139.3px;font-size:19.2px;line-height:1;white-space:nowrap;color:#1f1f1f;-webkit-text-stroke:0.45px currentColor;">Add comparison</div>
<svg style="position:absolute;left:893.0px;top:138.0px;" width="22.0" height="22.0" viewBox="0 0 22 22"><path d="M11 2v18M2 11h18" stroke="#3c4043" stroke-width="2.2"/></svg>
<div style="position:absolute;left:564.3px;top:211.0px;font-size:35.3px;line-height:1;white-space:nowrap;color:#1f1f1f;">Realtime overview</div>
<svg style="position:absolute;left:874.0px;top:215.6px;" width="26.5" height="26.5" viewBox="2 2 20 20"><path fill="#188038" d="M16.59 7.58L10 14.17l-3.59-3.58L5 12l5 5 8-8zM12 2C6.48 2 2 6.48 2 12s4.48 10 10 10 10-4.48 10-10S17.52 2 12 2zm0 18c-4.42 0-8-3.58-8-8s3.58-8 8-8 8 3.58 8 8-3.58 8-8 8z"/></svg>
<svg style="position:absolute;left:923.0px;top:225.4px;" width="14.0" height="8.0" viewBox="0 0 14 8"><path d="M0 0h14L7 7.6z" fill="#5f6368"/></svg>
<div style="position:absolute;left:1832.0px;top:173.0px;width:461.7px;height:101.8px;background:#f8f9fa;border-radius:31px"></div>
<svg style="position:absolute;left:1846.0px;top:206.0px;" width="36.0" height="36.0" viewBox="1846 206 36 36"><path d="M1851.35 218V211.75H1857.6M1870.6 211.75H1876.85V218M1876.85 231V237.25H1870.6M1857.6 237.25H1851.35V231" fill="none" stroke="#5f6368" stroke-width="2.9"/><circle cx="1864.1" cy="219.4" r="3.9" fill="none" stroke="#5f6368" stroke-width="2"/><path d="M1855.6 232.8V231.5c0-3 4-5 8.5-5s8.5 2 8.5 5V232.8Z" fill="none" stroke="#5f6368" stroke-width="2"/></svg>
<div style="position:absolute;left:1900.3px;top:213.4px;font-size:23.5px;line-height:1;white-space:nowrap;color:#3c4043;-webkit-text-stroke:0.3px currentColor;">View user snapshot</div>
<svg style="position:absolute;left:2132.0px;top:209.0px;" width="31.0" height="30.0" viewBox="0 0 31 30"><path d="M5 11V5H11M20 5H26V11M26 19V25H20M11 25H5V19" fill="none" stroke="#5f6368" stroke-width="3"/></svg>
<svg style="position:absolute;left:2186.0px;top:205.0px;" width="38.0" height="38.0" viewBox="2186 205 38 38"><path d="M2212 211.3H2193c-1.4 0-2.3.9-2.3 2.3V236c0 1.4.9 2.4 2.3 2.4H2216c1.4 0 2.4-1 2.4-2.4V218.5" fill="none" stroke="#5f6368" stroke-width="3"/><rect x="2196.4" y="220.9" width="3.2" height="12.8" fill="#5f6368"/><rect x="2202.8" y="226" width="3" height="7.7" fill="#5f6368"/><rect x="2209.2" y="227.8" width="3.3" height="5.9" fill="#5f6368"/><path d="M2205.2 220.5L2214.8 211.5L2217.8 214.3L2208.4 223.7H2205.2Z" fill="#5f6368"/><path d="M2216.5 210.4L2218.3 208.3L2221 211L2219 213Z" fill="#5f6368"/></svg>
<svg style="position:absolute;left:2244.0px;top:205.0px;" width="37.0" height="37.0" viewBox="0 0 24 24"><path fill="#5f6368" d="M18 16.08c-.76 0-1.44.3-1.96.77L8.91 12.7c.05-.23.09-.46.09-.7s-.04-.47-.09-.7l7.05-4.11c.54.5 1.25.81 2.04.81 1.66 0 3-1.34 3-3s-1.34-3-3-3-3 1.34-3 3c0 .24.04.47.09.7L8.04 9.81C7.5 9.31 6.79 9 6 9c-1.66 0-3 1.34-3 3s1.34 3 3 3c.79 0 1.5-.31 2.04-.81l7.12 4.16c-.05.21-.08.43-.08.65 0 1.61 1.31 2.92 2.92 2.92 1.610 0 2.92-1.31 2.92-2.92s-1.31-2.92-2.92-2.92zM18 4c.55 0 1 .45 1 1s-.45 1-1 1-1-.45-1-1 .45-1 1-1zM6 13c-.55 0-1-.45-1-1s.45-1 1-1 1 .45 1 1-.45 1-1 1zm12 7.02c-.55 0-1-.45-1-1s.45-1 1-1 1 .45 1 1-.45 1-1 1z"/></svg>
<div style="position:absolute;left:2276.8px;top:777.0px;width:64.2px;height:129.0px;background:#fff;border-radius:3px;box-shadow:0 1px 3px rgba(0,0,0,0.25)"></div>
<div style="position:absolute;left:2294.5px;top:805.5px;width:29.0px;height:6.5px;background:#c6c6c6;"></div>
<div style="position:absolute;left:2305.8px;top:794.3px;width:6.4px;height:29.0px;background:#c6c6c6;"></div>
<div style="position:absolute;left:2285.0px;top:841.0px;width:47.6px;height:1.0px;background:#e6e6e6;"></div>
<div style="position:absolute;left:2294.0px;top:870.6px;width:29.5px;height:7.4px;background:#666666;"></div>
<div style="position:absolute;left:1790.0px;top:922.3px;width:567.0px;height:22.7px;background:rgba(245,245,245,0.75);"></div>
<div style="position:absolute;left:1947.8px;top:922.3px;width:1.0px;height:22.7px;background:#d0d0d0;"></div>
<div style="position:absolute;left:2140.5px;top:922.3px;width:1.0px;height:22.7px;background:#d0d0d0;"></div>
<div style="position:absolute;left:2204.1px;top:922.3px;width:1.0px;height:22.7px;background:#d0d0d0;"></div>
<div style="position:absolute;left:1798.6px;top:926.5px;font-size:15.9px;line-height:1;white-space:nowrap;color:#000;">Keyboard shortcuts</div>
<div style="position:absolute;left:1956.6px;top:926.5px;font-size:15.9px;line-height:1;white-space:nowrap;color:#000;">Map data ©2024 Google</div>
<div style="position:absolute;left:2150.0px;top:926.5px;font-size:15.9px;line-height:1;white-space:nowrap;color:#000;">Terms</div>
<div style="position:absolute;left:2214.3px;top:926.5px;font-size:15.9px;line-height:1;white-space:nowrap;color:#000;">Report a map error</div>
</div></div>
<div style="position:absolute;left:563.0px;top:315.0px;width:487.0px;height:641.5px;background:#fff;border-radius:13px;box-shadow:0 0 0 1px #dadce0"></div>
<div style="position:absolute;left:601.5px;top:360.5px;font-size:19.37px;line-height:1;white-space:nowrap;color:#5f6368;-webkit-text-stroke:0.3px currentColor;">USERS IN LAST 30 MINUTES</div>
<div style="position:absolute;left:600.4px;top:383.2px;width:266.6px;height:2px;background:repeating-linear-gradient(90deg,#5f6368 0 6px,transparent 6px 10px)"></div>
<div style="position:absolute;left:601.0px;top:395.2px;font-size:55px;line-height:1;white-space:nowrap;color:#1f1f1f;">1</div>
<div style="position:absolute;left:601.5px;top:476.1px;font-size:18.8px;line-height:1;white-space:nowrap;color:#5f6368;-webkit-text-stroke:0.3px currentColor;">USERS PER MINUTE</div>
<div style="position:absolute;left:614.0px;top:577.4px;width:371.0px;height:2px;background:repeating-linear-gradient(90deg,#cdd0d4 0 11px,transparent 11px 13px)"></div>
<div style="position:absolute;left:985.0px;top:514.0px;width:11.0px;height:65.0px;background:#1a73e8;"></div>
<div style="position:absolute;left:601.6px;top:605.9px;font-size:19.27px;line-height:1;white-space:nowrap;color:#5f6368;-webkit-text-stroke:0.3px currentColor;">DEVICE CATEGORY IN LAST 30 MINUTES</div>
<svg style="position:absolute;left:716.0px;top:652.0px;" width="180.0" height="180.0" viewBox="0 0 180 180"><circle cx="89.9" cy="89.9" r="68.6" fill="none" stroke="#1967d2" stroke-width="22.2"/></svg>
<div style="position:absolute;left:738.1px;top:858.8px;width:9.8px;height:9.8px;border-radius:50%;background:#1967d2"></div>
<div style="position:absolute;left:756.5px;top:855.4px;font-size:17.6px;line-height:1;white-space:nowrap;color:#5f6368;-webkit-text-stroke:0.3px currentColor;letter-spacing:0.3px;">DESKTOP</div>
<div style="position:absolute;left:757.9px;top:881.8px;font-size:33.9px;line-height:1;white-space:nowrap;color:#1f1f1f;">100.0%</div>
<div style="position:absolute;left:2359.0px;top:98.0px;width:9.0px;height:903.5px;background:#dadbdf;border-radius:0 0 4.5px 4.5px;box-shadow:inset 0 0 0 1px #d0d1d5"></div>
<div style="position:absolute;left:2368.0px;top:98.0px;width:1.0px;height:1456.0px;background:#dadce0;"></div>
<div style="position:absolute;left:2369.0px;top:98.0px;width:511.0px;height:1456.0px;background:#f8f9fa;"></div>
<svg style="position:absolute;left:2404.6px;top:118.0px;" width="38.0" height="38.0" viewBox="0 0 24 24"><path fill="#5f6368" d="M20 11H7.83l5.59-5.59L12 4l-8 8 8 8 1.41-1.41L7.83 13H20v-2z"/></svg>
<div style="position:absolute;left:2479.1px;top:122.8px;font-size:29px;line-height:1;white-space:nowrap;color:#1f1f1f;">Build comparison</div>
<svg style="position:absolute;left:2808.0px;top:118.5px;" width="37.0" height="37.0" viewBox="0 0 24 24"><path fill="#5f6368" d="M19 6.41L17.59 5 12 10.59 6.41 5 5 6.41 10.59 12 5 17.59 6.41 19 12 13.41 17.59 19 19 17.59 13.41 12z"/></svg>
<div style="position:absolute;left:2369.0px;top:175.0px;width:511.0px;height:1.0px;background:#dadce0;"></div>
<div style="position:absolute;left:2388.3px;top:202.4px;width:470.3px;height:74.9px;border:1.5px solid #1a73e8;border-radius:12px;background:#fff"></div>
<svg style="position:absolute;left:2427.4px;top:221.6px;" width="38.4" height="38.4" viewBox="0 0 24 24"><path fill="#1a73e8" d="M11 7h2v2h-2zm0 4h2v6h-2zm1-9C6.48 2 2 6.48 2 12s4.48 10 10 10 10-4.48 10-10S17.52 2 12 2zm0 18c-4.41 0-8-3.59-8-8s3.59-8 8-8 8 3.59 8 8-3.590 8-8 8z"/></svg>
<div style="position:absolute;left:2492.2px;top:230.1px;font-size:22.76px;line-height:1;white-space:nowrap;color:#3c4043;">All users can't be edited.</div>
<div style="position:absolute;left:2388px;top:298px;width:471px;height:283px;border:1px solid #dadce0;border-radius:12px;background:#fff"></div>
<div style="position:absolute;left:2415.5px;top:323.6px;font-size:17.6px;line-height:1;white-space:nowrap;color:#45484c;letter-spacing:0.62px;">CONDITIONS (BUILD UP TO 5)</div>
<div style="position:absolute;left:2389.0px;top:368.0px;width:471.0px;height:1.0px;background:#dadce0;"></div>
<div style="position:absolute;left:2415.0px;top:397.5px;font-size:21.5px;line-height:1;white-space:nowrap;color:#bdc1c6;">Dimension</div>
<svg style="position:absolute;left:2800.0px;top:392.0px;" width="30.0" height="30.0" viewBox="2800 392 30 30"><path d="M2805 400.4H2824.6M2810.3 400.4V398.1H2819.3V400.4M2807 400.6V416.6H2822.6V400.6" fill="none" stroke="#bdc1c6" stroke-width="2.3"/></svg>
<div style="position:absolute;left:2415.5px;top:428.5px;width:417.2px;height:61px;border:1px solid #dadce0;border-radius:6px;background:#fff"></div>
<div style="position:absolute;left:2440.4px;top:449.6px;font-size:22.7px;line-height:1;white-space:nowrap;color:#bdc1c6;">Select dimension</div>
<svg style="position:absolute;left:2796.0px;top:455.6px;" width="15.3" height="9.0" viewBox="0 0 15 9"><path d="M0 0h15L7.5 8.7z" fill="#d0d2d6"/></svg>
<div style="position:absolute;left:2389.0px;top:524.0px;width:471.0px;height:1.0px;background:#dadce0;"></div>
<svg style="position:absolute;left:2516.0px;top:541.0px;" width="27.0" height="27.0" viewBox="0 0 27 27"><path d="M13.5 2.5v22M2.5 13.5h22" stroke="#c0d6fa" stroke-width="2.2"/></svg>
<div style="position:absolute;left:2561.0px;top:542.1px;font-size:24.3px;line-height:1;white-space:nowrap;color:#c0d6fa;">Add new condition</div>
<div style="position:absolute;left:2369.0px;top:603.0px;width:511.0px;height:1.0px;background:#dadce0;"></div>
<div style="position:absolute;left:2717.0px;top:1471.0px;width:138.0px;height:56.7px;background:#e3e3e5;border-radius:7px"></div>
<div style="position:absolute;left:2756.0px;top:1487.5px;font-size:23.9px;line-height:1;white-space:nowrap;color:#9aa0a6;-webkit-text-stroke:0.3px currentColor;">Apply</div>
<div style="position:absolute;left:563px;top:981px;width:614px;height:700px;border:1px solid #dadce0;border-radius:16px;background:#fff"></div>
<div style="position:absolute;left:1203px;top:981px;width:485px;height:700px;border:1px solid #dadce0;border-radius:16px;background:#fff"></div>
<div style="position:absolute;left:1715px;top:981px;width:485px;height:700px;border:1px solid #dadce0;border-radius:16px;background:#fff"></div>
<div style="position:absolute;left:601.7px;top:1024.2px;font-size:22.4px;line-height:1;white-space:nowrap;color:#3c4043;">Users</div>
<div style="position:absolute;left:601.0px;top:1048.7px;width:59.7px;height:2px;background:repeating-linear-gradient(90deg,#80868b 0 5px,transparent 5px 8px)"></div>
<div style="position:absolute;left:668.0px;top:1024.2px;font-size:22.4px;line-height:1;white-space:nowrap;color:#3c4043;">by</div>
<div style="position:absolute;left:700.7px;top:1023.4px;font-size:23.3px;line-height:1;white-space:nowrap;color:#1f1f1f;-webkit-text-stroke:0.3px currentColor;">First user source</div>
<svg style="position:absolute;left:875.0px;top:1031.8px;" width="15.6" height="8.4" viewBox="0 0 15.6 8.4"><path d="M0 0h15.6L7.8 8.2z" fill="#757575"/></svg>
<div style="position:absolute;left:602.0px;top:1088.5px;font-size:23px;line-height:1;white-space:nowrap;color:#1f1f1f;font-weight:bold;">#1</div>
<div style="position:absolute;left:642.0px;top:1100.0px;width:9.0px;height:2.4px;background:#1f1f1f;"></div>
<div style="position:absolute;left:641.0px;top:1178.6px;width:5.4px;height:1.8px;background:#5f6368;"></div>
<div style="position:absolute;left:892.1px;top:1155.5px;font-size:22.1px;line-height:1;white-space:nowrap;color:#5f6368;">No data available</div>
<div style="position:absolute;left:601.4px;top:1221.7px;font-size:19.56px;line-height:1;white-space:nowrap;color:#5f6368;-webkit-text-stroke:0.3px currentColor;">FIRST USER SOURCE</div>
<div style="position:absolute;left:601.4px;top:1244.8px;width:205.0px;height:2px;background:repeating-linear-gradient(90deg,#5f6368 0 6px,transparent 6px 10px)"></div>
<div style="position:absolute;right:1741.4px;top:1222.2px;font-size:18.9px;line-height:1;white-space:nowrap;color:#5f6368;-webkit-text-stroke:0.3px currentColor;">USERS</div>
<div style="position:absolute;left:1073.4px;top:1244.8px;width:65.2px;height:2px;background:repeating-linear-gradient(90deg,#5f6368 0 6px,transparent 6px 10px)"></div>
<div style="position:absolute;left:601.0px;top:1257.6px;width:538.7px;height:1.0px;background:#dadce0;"></div>
<div style="position:absolute;left:785.0px;top:1287.4px;font-size:22.1px;line-height:1;white-space:nowrap;color:#5f6368;">No data available</div>
<div style="position:absolute;left:1241.4px;top:1024.4px;font-size:22.4px;line-height:1;white-space:nowrap;color:#1f1f1f;">Users</div>
<svg style="position:absolute;left:1300.7px;top:1031.6px;" width="14.7" height="8.3" viewBox="0 0 14.7 8.3"><path d="M0 0h14.7L7.35 8.2z" fill="#757575"/></svg>
<div style="position:absolute;left:1322.0px;top:1024.4px;font-size:22.4px;line-height:1;white-space:nowrap;color:#3c4043;">by</div>
<div style="position:absolute;left:1354.6px;top:1023.0px;font-size:24px;line-height:1;white-space:nowrap;color:#3c4043;">Audience</div>
<div style="position:absolute;left:1354.6px;top:1048.9px;width:99.9px;height:2px;background:repeating-linear-gradient(90deg,#80868b 0 5px,transparent 5px 8px)"></div>
<div style="position:absolute;left:1241.4px;top:1088.5px;font-size:23px;line-height:1;white-space:nowrap;color:#1f1f1f;font-weight:bold;">#1</div>
<div style="position:absolute;left:1282.2px;top:1087.1px;font-size:24.6px;line-height:1;white-space:nowrap;color:#1f1f1f;-webkit-text-stroke:0.45px currentColor;">All Users</div>
<div style="position:absolute;left:1281.0px;top:1129.2px;font-size:31px;line-height:1;white-space:nowrap;color:#1f1f1f;">1</div>
<div style="position:absolute;left:1282.2px;top:1171.1px;font-size:18px;line-height:1;white-space:nowrap;color:#5f6368;">100%</div>
<div style="position:absolute;left:1413.0px;top:1189.0px;width:231.0px;height:2px;background:repeating-linear-gradient(90deg,#b3b7bd 0 6px,transparent 6px 8px)"></div>
<div style="position:absolute;left:1645.0px;top:1135.3px;width:6.0px;height:55.3px;background:#1a73e8;"></div>
<div style="position:absolute;left:1241.4px;top:1221.4px;font-size:19.7px;line-height:1;white-space:nowrap;color:#5f6368;-webkit-text-stroke:0.3px currentColor;">AUDIENCE</div>
<div style="position:absolute;left:1241.4px;top:1244.7px;width:102.0px;height:2px;background:repeating-linear-gradient(90deg,#5f6368 0 6px,transparent 6px 10px)"></div>
<div style="position:absolute;right:1229.8px;top:1222.0px;font-size:18.9px;line-height:1;white-space:nowrap;color:#5f6368;-webkit-text-stroke:0.3px currentColor;">USERS</div>
<div style="position:absolute;left:1585.6px;top:1244.7px;width:64.6px;height:2px;background:repeating-linear-gradient(90deg,#5f6368 0 6px,transparent 6px 10px)"></div>
<div style="position:absolute;left:1241.4px;top:1257.8px;width:410.6px;height:1.0px;background:#dadce0;"></div>
<div style="position:absolute;left:1241.4px;top:1272.6px;font-size:20.5px;line-height:1;white-space:nowrap;color:#1f1f1f;-webkit-text-stroke:0.3px currentColor;">All Users</div>
<div style="position:absolute;right:1230.8px;top:1272.6px;font-size:20.5px;line-height:1;white-space:nowrap;color:#1f1f1f;">1</div>
<div style="position:absolute;left:1243.0px;top:1305.7px;width:409.8px;height:3.0px;background:#1a73e8;"></div>
<div style="position:absolute;left:1753.6px;top:1023.9px;font-size:23.4px;line-height:1;white-space:nowrap;color:#3c4043;">Views</div>
<div style="position:absolute;left:1753.6px;top:1048.2px;width:61.9px;height:2px;background:repeating-linear-gradient(90deg,#80868b 0 5px,transparent 5px 8px)"></div>
<div style="position:absolute;left:1822.0px;top:1024.8px;font-size:22.4px;line-height:1;white-space:nowrap;color:#3c4043;">by</div>
<div style="position:absolute;left:1854.8px;top:1023.6px;font-size:23.8px;line-height:1;white-space:nowrap;color:#3c4043;">Page title and screen name</div>
<div style="position:absolute;left:1854.8px;top:1048.2px;width:290.0px;height:2px;background:repeating-linear-gradient(90deg,#80868b 0 5px,transparent 5px 8px)"></div>
<div style="position:absolute;left:1753.6px;top:1088.4px;font-size:23px;line-height:1;white-space:nowrap;color:#1f1f1f;font-weight:bold;">#1</div>
<div style="position:absolute;left:1793.8px;top:1086.2px;font-size:25.5px;line-height:1;white-space:nowrap;color:#1f1f1f;-webkit-text-stroke:0.45px currentColor;">About</div>
<div style="position:absolute;left:1792.6px;top:1129.2px;font-size:31px;line-height:1;white-space:nowrap;color:#1f1f1f;">1</div>
<div style="position:absolute;left:1793.8px;top:1170.5px;font-size:18px;line-height:1;white-space:nowrap;color:#5f6368;">33.33%</div>
<div style="position:absolute;left:1924.9px;top:1188.7px;width:231.4px;height:2px;background:repeating-linear-gradient(90deg,#b3b7bd 0 6px,transparent 6px 8px)"></div>
<div style="position:absolute;left:2157.0px;top:1135.0px;width:6.0px;height:56.0px;background:#1a73e8;"></div>
<div style="position:absolute;left:1753.6px;top:1221.1px;font-size:19.6px;line-height:1;white-space:nowrap;color:#5f6368;-webkit-text-stroke:0.3px currentColor;">PAGE TITLE AND S…</div>
<div style="position:absolute;left:1753.6px;top:1244.6px;width:185.8px;height:2px;background:repeating-linear-gradient(90deg,#5f6368 0 6px,transparent 6px 10px)"></div>
<div style="position:absolute;right:718.0px;top:1221.2px;font-size:19.5px;line-height:1;white-space:nowrap;color:#5f6368;-webkit-text-stroke:0.3px currentColor;">VIEWS</div>
<div style="position:absolute;left:2099.0px;top:1244.6px;width:63.0px;height:2px;background:repeating-linear-gradient(90deg,#5f6368 0 6px,transparent 6px 10px)"></div>
<div style="position:absolute;left:1753.6px;top:1257.8px;width:410.3px;height:1.0px;background:#dadce0;"></div>
<div style="position:absolute;left:1753.6px;top:1271.6px;font-size:20.6px;line-height:1;white-space:nowrap;color:#1f1f1f;-webkit-text-stroke:0.3px currentColor;">About</div>
<div style="position:absolute;right:718.5px;top:1271.6px;font-size:20.6px;line-height:1;white-space:nowrap;color:#1f1f1f;">1</div>
<div style="position:absolute;left:1891.0px;top:1306.7px;width:272.9px;height:1.0px;background:#dadce0;"></div>
<div style="position:absolute;left:1753.6px;top:1305.7px;width:137.4px;height:3.0px;background:#1a73e8;"></div>
<div style="position:absolute;left:1753.6px;top:1320.0px;font-size:20.6px;line-height:1;white-space:nowrap;color:#1f1f1f;-webkit-text-stroke:0.3px currentColor;">Contact</div>
<div style="position:absolute;right:718.5px;top:1320.0px;font-size:20.6px;line-height:1;white-space:nowrap;color:#1f1f1f;">1</div>
<div style="position:absolute;left:1891.0px;top:1355.0px;width:272.9px;height:1.0px;background:#dadce0;"></div>
<div style="position:absolute;left:1753.6px;top:1354.0px;width:137.4px;height:3.0px;background:#1a73e8;"></div>
<div style="position:absolute;left:1753.6px;top:1369.2px;font-size:20.6px;line-height:1;white-space:nowrap;color:#1f1f1f;-webkit-text-stroke:0.3px currentColor;">Content Style Guide</div>
<div style="position:absolute;right:718.5px;top:1369.2px;font-size:20.6px;line-height:1;white-space:nowrap;color:#1f1f1f;">1</div>
<div style="position:absolute;left:1753.6px;top:1402.7px;width:137.4px;height:3.0px;background:#1a73e8;"></div>
</body></html>
